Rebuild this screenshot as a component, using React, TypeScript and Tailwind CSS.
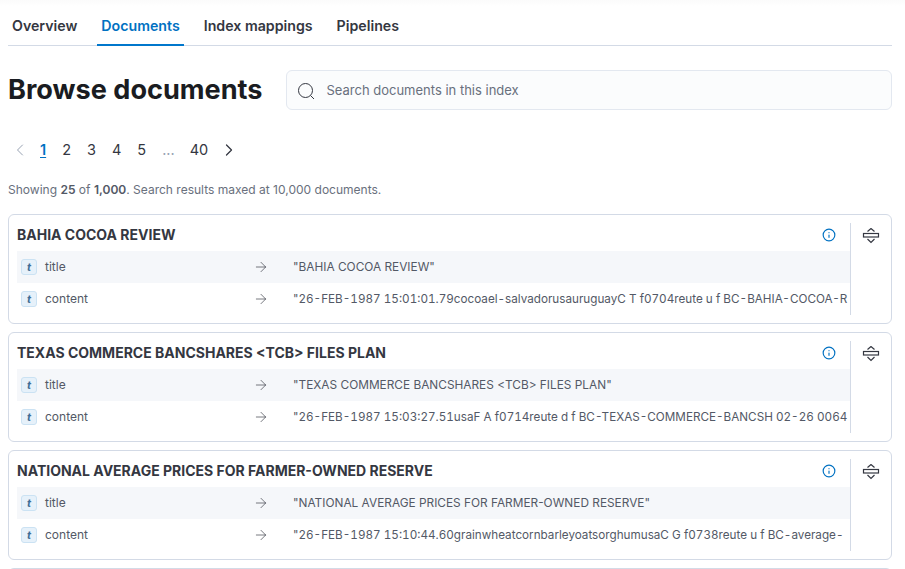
import { ArrowRight, ChevronLeft, ChevronRight, Info } from "lucide-react";

const docs = [
  {
    name: "BAHIA COCOA REVIEW",
    content: "26-FEB-1987 15:01:01.79cocoael-salvadorusauruguayC T f0704reute u f BC-BAHIA-COCOA-R",
  },
  {
    name: "TEXAS COMMERCE BANCSHARES <TCB> FILES PLAN",
    content: "26-FEB-1987 15:03:27.51usaF A f0714reute d f BC-TEXAS-COMMERCE-BANCSH 02-26 0064",
  },
  {
    name: "NATIONAL AVERAGE PRICES FOR FARMER-OWNED RESERVE",
    content: "26-FEB-1987 15:10:44.60grainwheatcornbarleyoatsorghumusaC G f0738reute u f BC-average-",
  },
];

const FieldRow = ({ label, value, shaded, wide }: { label: string; value: string; shaded?: boolean; wide?: boolean }) => {
  return (
    <div className={`flex h-8 items-center text-xs text-[#535966] ${shaded ? "bg-[#f5f7fa]" : ""}`}>
      <span className="ml-1 flex h-4 w-4 shrink-0 items-center justify-center rounded-[3px] border border-[#cbe2f3] bg-[#e6f1fa] text-[11px] font-bold italic text-[#3f6e96]">
        t
      </span>
      <span className="ml-2 w-[208px] shrink-0">{label}</span>
      <ArrowRight size={16} strokeWidth={1} className="shrink-0 text-[#343741]" />
      <span className={`ml-6 whitespace-nowrap pt-px ${wide ? "text-[11.7px] tabular-nums" : "text-[11.85px]"}`}>"{value}</span>
    </div>
  );
};

const DocCard = ({ name, content }: { name: string; content: string }) => {
  return (
    <div className="flex h-[110px] rounded-md border border-[#d3dae6] bg-white py-2 pl-2">
      <div className="flex min-w-0 flex-1 flex-col border-r border-[#d3dae6]">
        <div className="flex h-[28px] items-center justify-between pb-1 pr-[14px]">
          <h4 className="text-sm font-bold text-[#343741]">{name}</h4>
          <Info size={14} strokeWidth={2} className="text-[#0071c2]" />
        </div>
        <FieldRow label="title" value={`${name}"`} shaded />
        <FieldRow label="content" value={content} wide />
      </div>
      <div className="flex w-10 shrink-0 justify-center pt-[5px]">
        <svg width="18" height="18" viewBox="0 0 18 18" fill="none" stroke="#343741" strokeWidth="1.2">
          <path d="M5.500 3.500 9 .5l3.500 3" />
          <rect x="1.500" y="5.500" width="15" height="3.500" />
          <path d="M5.500 11 9 14.500l3.500-3.500" />
        </svg>
      </div>
    </div>
  );
};

export default function App() {
  return (
    <div className="min-h-[569px] overflow-hidden bg-white bg-linear-to-b from-[#fbfbfb] to-white to-[6px] pl-2 pr-[13px] font-['Inter',sans-serif] text-[#343741]">
      <nav className="flex h-[46px] items-stretch border-b border-[#d3dae6] pt-[6px] text-[14.2px] font-semibold">
        <span className="ml-1 flex items-center">Overview</span>
        <span className="-mb-px ml-5 flex items-center border-b-2 border-[#0077cc] px-1 pt-[2px] text-[#0071c2]">Documents</span>
        <span className="ml-5 flex items-center">Index mappings</span>
        <span className="ml-6 flex items-center">Pipelines</span>
      </nav>

      <div className="mt-6 flex items-center gap-6">
        <h2 className="whitespace-nowrap text-[27.1px] font-bold leading-10 text-[#1a1c21]">Browse documents</h2>
        <div className="flex h-10 flex-1 items-center rounded-md border border-[#e3e8f0] bg-[#fbfcfd] pl-[10px] pt-px text-[13px] text-[#69707d]">
          <svg width="18" height="18" viewBox="0 0 18 18" fill="none" stroke="#343741" strokeWidth="1">
            <circle cx="8.500" cy="8.500" r="7" />
            <path d="m13.500 13.500 3.500 3.500" />
          </svg>
          <span className="ml-[11px]">Search documents in this index</span>
        </div>
      </div>

      <div className="mt-[26px] flex h-[28px] items-center text-[14.5px] text-[#343741]">
        <ChevronLeft size={20} strokeWidth={1.2} className="ml-[2px] text-[#98a2b3]" />
        <span className="ml-[10px] font-semibold text-[#0071c2] underline underline-offset-2">1</span>
        <span className="ml-[16px]">2</span>
        <span className="ml-[16px]">3</span>
        <span className="ml-[16px]">4</span>
        <span className="ml-[16px]">5</span>
        <span className="ml-[16px] text-[#98a2b3]">...</span>
        <span className="ml-[15px]">40</span>
        <ChevronRight size={20} strokeWidth={1.5} className="ml-[11px]" />
      </div>

      <p className="mt-[18px] text-[12.03px] leading-4 text-[#69707d]">
        Showing <b className="font-semibold text-[#535966]">25</b> of <b className="font-semibold text-[#535966]">1,000</b>. Search results maxed at 10,000 documents.
      </p>

      <div className="mt-[16px] flex flex-col gap-2">
        {docs.map((d) => (
          <DocCard key={d.name} name={d.name} content={d.content} />
        ))}
        <div className="h-4 rounded-t-md border border-[#d3dae6]" />
      </div>
    </div>
  );
}
